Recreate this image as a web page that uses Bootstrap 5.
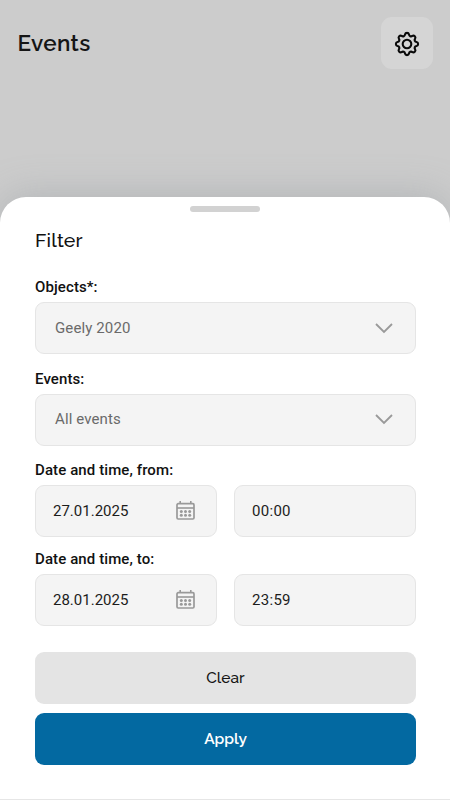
<!DOCTYPE html>
<html lang="en">
<head>
<meta charset="utf-8">
<meta name="viewport" content="width=device-width, initial-scale=1">
<title>Events</title>
<link href="https://cdn.jsdelivr.net/npm/bootstrap@5.3.0/dist/css/bootstrap.min.css" rel="stylesheet">
<style>
body { background: #ccc; font-family: Roboto, "Liberation Sans", sans-serif; font-size: 15px; line-height: 20px; color: #111; }
.screen { height: 800px; }
.page-head { height: 197px; padding: 17px 17px 0 17px; }
.page-title { font: 600 22.5px/30px Raleway, Lato, sans-serif; color: #151515; margin: 11px 0 0 .5px; letter-spacing: .3px; }
.gear-btn { width: 52px; height: 52px; border-radius: 11px; background: #d5d5d5; border: 0; padding: 2px 0 0; color: #0a0a0a; }
.sheet { background: #fff; border-radius: 26px 26px 0 0; padding: 9px 35px 0 35px; box-shadow: 0 -3px 36px rgba(135,145,150,.36); border-bottom: 1px solid #e6e6e6; }
.grabber { width: 70px; height: 6px; border-radius: 3px; background: #d2d2d2; }
.sheet-title { font: 500 19.5px/26px Raleway, Lato, sans-serif; letter-spacing: .15px; margin: 16px 0 23px; }
.filter-form { margin-right: -1px; }
.field-label { font-weight: 500; height: 20px; margin-bottom: 5px; color: #111; letter-spacing: .1px; }
.field { height: 52px; background: #f4f4f4; border: 1px solid #e5e5e5; border-radius: 9px; font-weight: 400; }
.field-select { padding: 0 22px 1px 19px; color: #6a6a6a; letter-spacing: .12px; margin-bottom: 15px; }
.field-select:nth-of-type(4) { padding-bottom: 2px; margin-bottom: 14px; }
.date-row { gap: 17px; margin-bottom: 12px; }
.field-input { padding: 0 21px 1px 17px; flex: 1 1 0; color: #1c1c1c; }
.field-time { letter-spacing: .3px; }
.field-icon { color: #999; }
.actions { gap: 9px; margin-top: 26px; }
.action { height: 52px; border: 0; border-radius: 9px; font: 500 15.5px/20px Raleway, Lato, sans-serif; padding: 0; }
.action-clear, .action-clear:hover { background: #e4e4e4; color: #151515; }
.action-apply, .action-apply:hover { background: #0369a1; color: #fff; font-weight: 600; }
</style>
</head>
<body>
<svg class="d-none">
  <symbol id="chevron" viewBox="0 0 18 12"><path d="M1 2l8 8 8-8" fill="none" stroke="currentColor" stroke-width="1.8"/></symbol>
  <symbol id="calendar" viewBox="0 0 19 19">
    <g fill="none" stroke="currentColor">
      <rect x="1" y="2.7" width="17" height="15.3" rx="1.2" stroke-width="1.7"/>
      <path d="M1 7h17" stroke-width="1.6"/>
      <path d="M4.2 0v3M14.8 0v3" stroke-width="1.6"/>
    </g>
    <g fill="currentColor">
      <circle cx="5.3" cy="10.5" r="1.5"/><circle cx="9.5" cy="10.5" r="1.5"/><circle cx="13.7" cy="10.5" r="1.5"/>
      <circle cx="5.3" cy="14.3" r="1.5"/><circle cx="9.5" cy="14.3" r="1.5"/><circle cx="13.7" cy="14.3" r="1.5"/>
    </g>
  </symbol>
</svg>
<div class="screen d-flex flex-column overflow-hidden">
  <header class="page-head d-flex justify-content-between align-items-start flex-shrink-0">
    <h1 class="page-title">Events</h1>
    <button class="gear-btn d-flex align-items-center justify-content-center" type="button" aria-label="Settings">
      <svg width="26" height="26" viewBox="-13 -13 26 26" fill="none" stroke="currentColor" stroke-width="2.1" stroke-linejoin="round">
        <path d="M-2-9.5A2.05 2.05 0 0 1 2-9.5A2 2 0 0 0 5.3-8.1A2.05 2.05 0 0 1 8.1-5.3A2 2 0 0 0 9.5-2A2.05 2.05 0 0 1 9.5 2A2 2 0 0 0 8.1 5.3A2.05 2.05 0 0 1 5.3 8.1A2 2 0 0 0 2 9.5A2.05 2.05 0 0 1-2 9.5A2 2 0 0 0-5.3 8.1A2.05 2.05 0 0 1-8.1 5.3A2 2 0 0 0-9.5 2A2.05 2.05 0 0 1-9.5-2A2 2 0 0 0-8.1-5.3A2.05 2.05 0 0 1-5.3-8.1A2 2 0 0 0-2-9.5Z"/>
        <circle r="4.3"/>
      </svg>
    </button>
  </header>
  <main class="sheet flex-grow-1">
    <div class="grabber mx-auto"></div>
    <h2 class="sheet-title">Filter</h2>
    <form class="filter-form">
      <div class="field-label">Objects*:</div>
      <div class="field field-select d-flex align-items-center justify-content-between">
        <span>Geely 2020</span>
        <svg class="field-icon" width="18" height="12"><use href="#chevron"/></svg>
      </div>
      <div class="field-label">Events:</div>
      <div class="field field-select d-flex align-items-center justify-content-between">
        <span>All events</span>
        <svg class="field-icon" width="18" height="12"><use href="#chevron"/></svg>
      </div>
      <div class="field-label">Date and time, from:</div>
      <div class="date-row d-flex">
        <div class="field field-input d-flex align-items-center justify-content-between">
          <span>27.01.2025</span>
          <svg class="field-icon" width="19" height="19"><use href="#calendar"/></svg>
        </div>
        <div class="field field-input field-time d-flex align-items-center"><span>00:00</span></div>
      </div>
      <div class="field-label">Date and time, to:</div>
      <div class="date-row d-flex mb-0">
        <div class="field field-input d-flex align-items-center justify-content-between">
          <span>28.01.2025</span>
          <svg class="field-icon" width="19" height="19"><use href="#calendar"/></svg>
        </div>
        <div class="field field-input field-time d-flex align-items-center"><span>23:59</span></div>
      </div>
      <div class="actions d-flex flex-column">
        <button class="btn action action-clear" type="button">Clear</button>
        <button class="btn action action-apply" type="button">Apply</button>
      </div>
    </form>
  </main>
</div>
</body>
</html>
